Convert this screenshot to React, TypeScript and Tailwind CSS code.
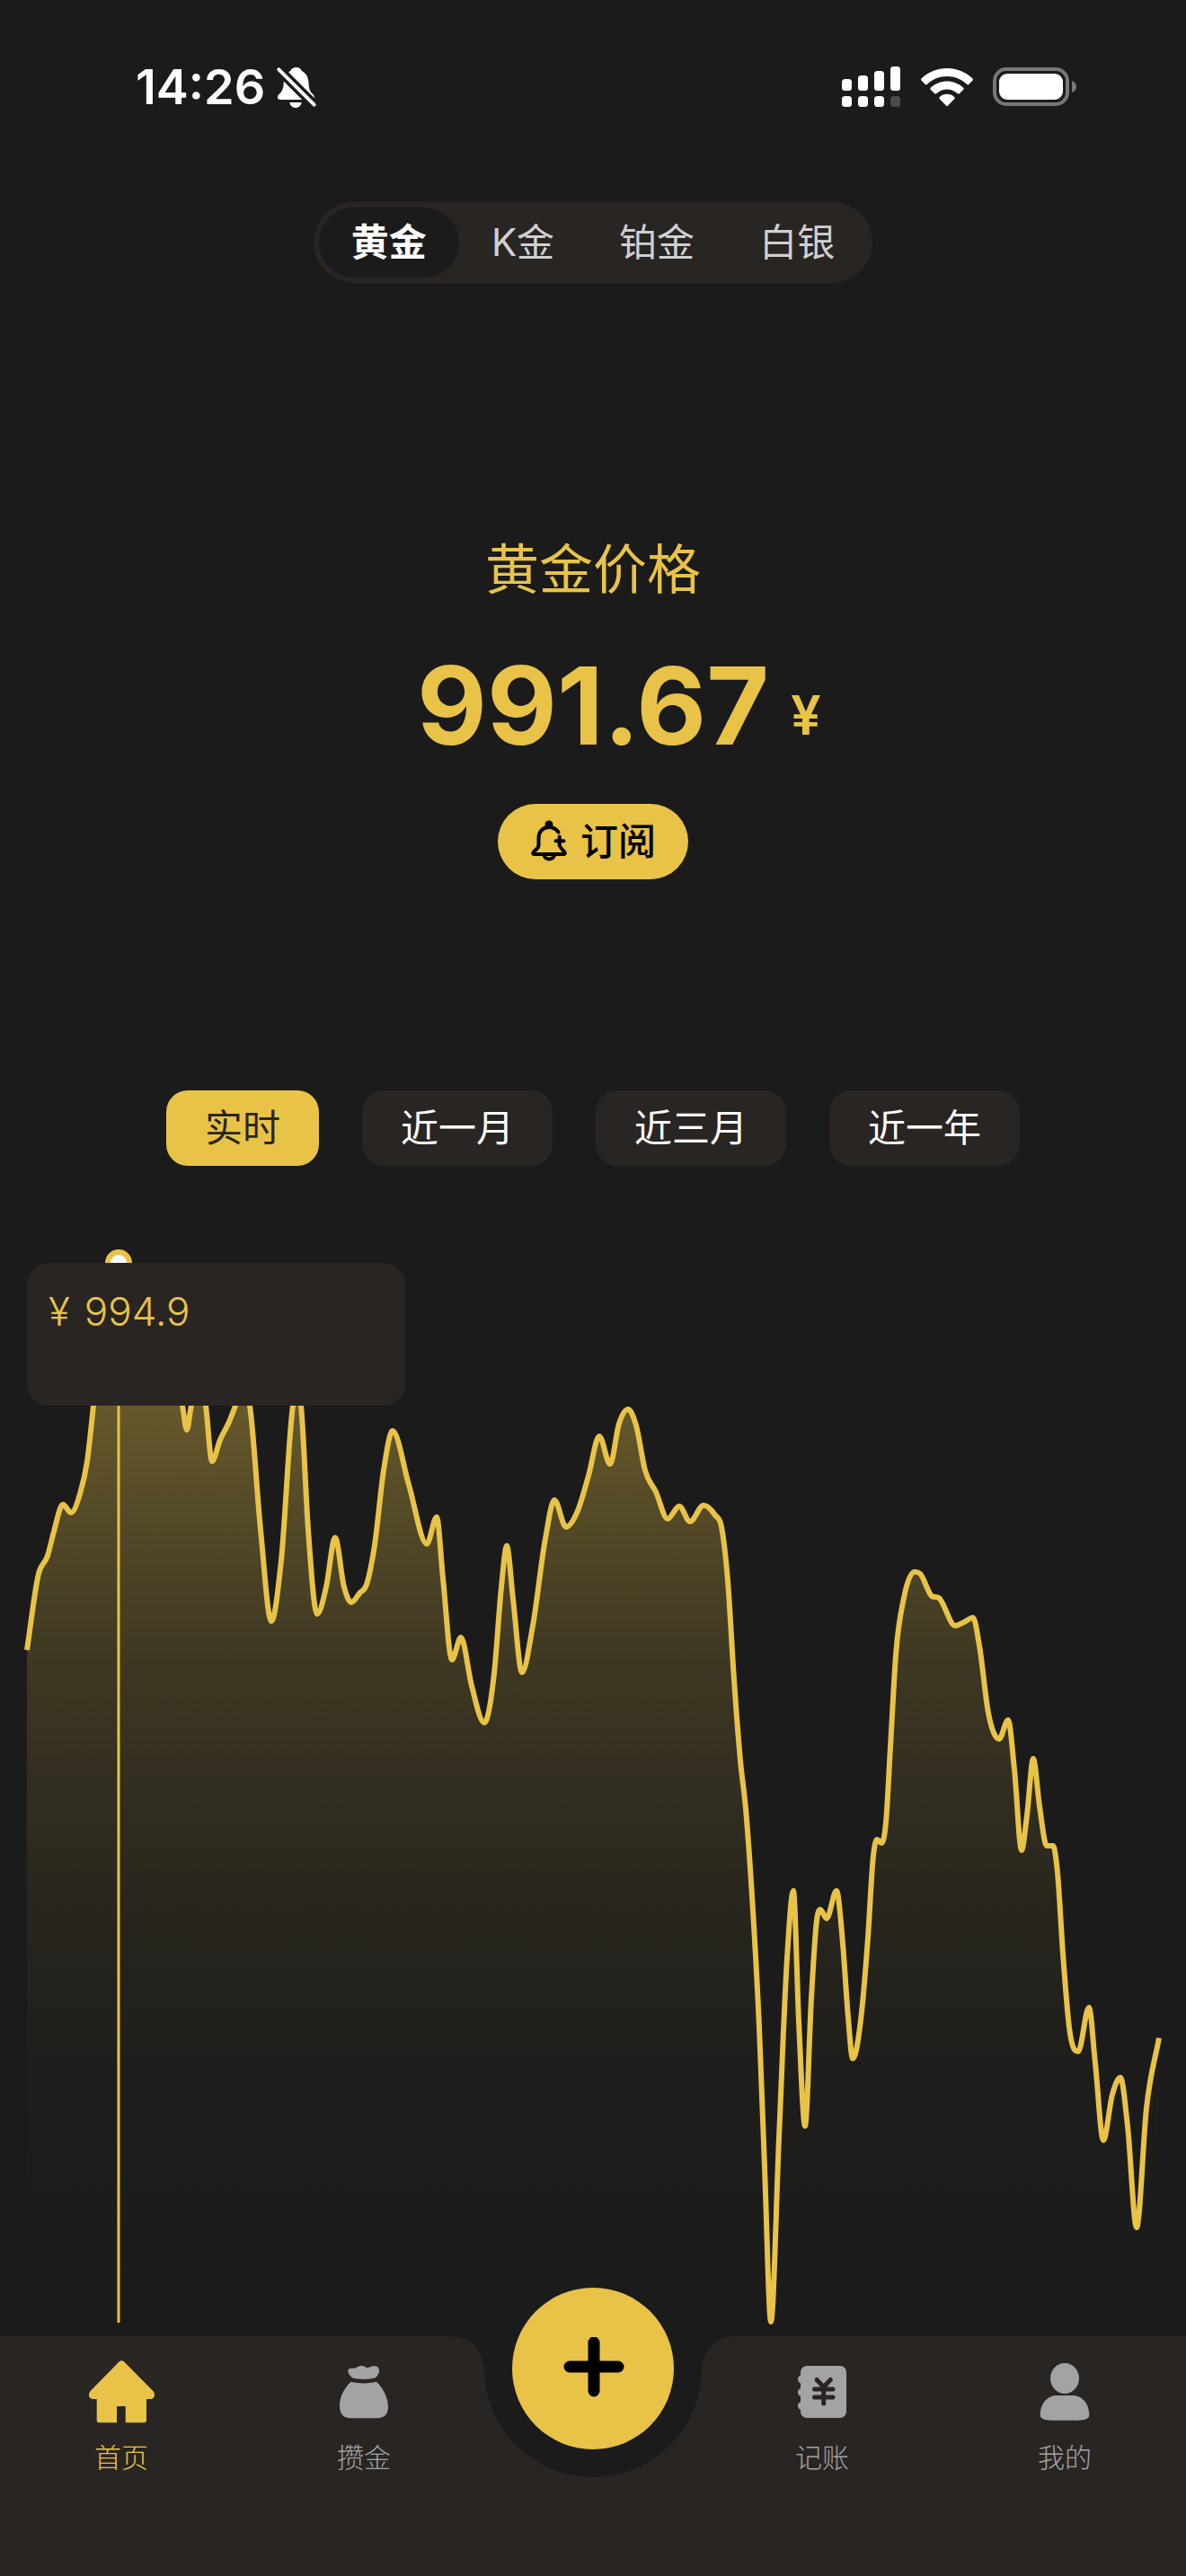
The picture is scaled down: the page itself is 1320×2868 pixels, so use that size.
import React from "react";

const metals = ["黄金", "K金", "铂金", "白银"];
const ranges = ["实时", "近一月", "近三月", "近一年"];

// [x, y] of the price line, in the chart's own units
const points: [number, number][] = [
  [30, 457], [43, 372], [53, 352], [60, 325], [70, 295], [79, 304], [89, 283], [97, 247],
  [104, 185], [112, 110], [131, 26], [170, 60], [203, 185], [208, 212], [212, 190], [220, 140],
  [229, 185], [236, 247], [245, 223], [255, 203], [262, 185], [270, 160], [278, 185], [290, 323],
  [302, 425], [313, 357], [326, 185], [331, 165], [335, 185], [343, 323], [353, 417], [363, 387],
  [373, 332], [383, 387], [391, 404], [400, 394], [408, 384], [417, 340], [427, 257], [437, 213],
  [455, 273], [475, 339], [486, 309], [493, 377], [503, 468], [513, 443], [525, 497], [539, 538],
  [550, 483], [558, 387], [564, 341], [571, 400], [581, 482], [593, 430], [607, 333], [617, 290],
  [630, 320], [643, 302], [655, 263], [667, 219], [679, 250], [689, 205], [699, 189], [708, 207],
  [718, 257], [730, 281], [743, 311], [756, 297], [768, 314], [783, 296], [796, 307], [803, 320],
  [810, 380], [817, 490], [824, 580], [830, 634], [837, 731], [845, 877], [851, 1033], [858, 1205],
  [867, 1000], [876, 800], [883, 725], [889, 870], [896, 987], [903, 845], [909, 758], [913, 746],
  [920, 756], [931, 725], [938, 784], [944, 866], [949, 912], [959, 860], [966, 777], [972, 686],
  [976, 668], [981, 672], [986, 649], [991, 565], [997, 463], [1006, 399], [1018, 370], [1024, 372],
  [1037, 397], [1045, 399], [1063, 430], [1073, 426], [1083, 421], [1090, 452], [1100, 527],
  [1112, 556], [1122, 535], [1129, 590], [1137, 680], [1143, 641], [1150, 578], [1157, 631],
  [1165, 675], [1172, 675], [1177, 705], [1183, 795], [1190, 877], [1200, 904],
  [1212, 855], [1219, 917], [1228, 1003], [1238, 952], [1247, 933], [1255, 987], [1265, 1100],
  [1276, 967], [1290, 889],
];

// monotone cubic line, flat at every peak and valley
const buildLine = (pts: [number, number][]) => {
  const slopes = pts.slice(1).map((p, i) => (p[1] - pts[i][1]) / (p[0] - pts[i][0]));
  const tangents = pts.map((_, i) => {
    if (i === 0) return slopes[0];
    if (i === pts.length - 1) return slopes[i - 1];
    const a = slopes[i - 1];
    const b = slopes[i];
    if (a * b <= 0) return 0;
    const h0 = pts[i][0] - pts[i - 1][0];
    const h1 = pts[i + 1][0] - pts[i][0];
    const mean = (a * h1 + b * h0) / (h0 + h1);
    return Math.sign(a) * Math.min(Math.abs(mean), 3 * Math.abs(a), 3 * Math.abs(b));
  });
  let d = `M${pts[0][0]} ${pts[0][1]}`;
  for (let i = 1; i < pts.length; i++) {
    const [x0, y0] = pts[i - 1];
    const [x1, y1] = pts[i];
    const h = (x1 - x0) / 3;
    d += `C${x0 + h} ${y0 + tangents[i - 1] * h} ${x1 - h} ${y1 - tangents[i] * h} ${x1} ${y1}`;
  }
  return d;
};

const line = buildLine(points);

const StatusBar = () => {
  return (
    <div className="flex h-[194px] items-center justify-between pl-[151px] pr-[121px]">
      <div className="flex items-center gap-3">
        <span className="text-[54px] leading-none font-semibold text-white">14:26</span>
        <svg width="46" height="48" viewBox="0 0 46 48" fill="#fff">
          <path d="M22.7 2c3 0 5.200 1.500 6.200 4 4.800 2.300 7.300 7 7.600 13 .3 7 1.500 10 4.700 13 1.500 1.500 1.800 2.700 1.500 4-.3 1.300-1.300 2-3 2H5c-1.700 0-2.700-.7-3-2-.3-1.300.1-2.500 1.500-4 3.700-3.500 5-6.500 5.200-13 .3-6 2.700-10.700 7.500-13 1-2.500 3.500-4 6.500-4zM15.300 41h13.400c-.5 3.500-3.200 6-6.700 6s-6.200-2.500-6.700-6z" />
          <path d="M2 3l42 42" stroke="#1b1b1b" strokeWidth="11" />
          <path d="M3.300 4.300l39.400 39.400" stroke="#fff" strokeWidth="4" strokeLinecap="round" />
        </svg>
      </div>
      <div className="flex items-center gap-[22px]">
        <svg width="66" height="48" viewBox="0 0 66 48" fill="#fff">
          <rect x="0" y="15" width="11" height="13" rx="3.500" />
          <rect x="18" y="11" width="11" height="17" rx="3.500" />
          <rect x="36" y="6" width="11" height="22" rx="3.500" />
          <rect x="54" y="1" width="11" height="27" rx="3.500" />
          <rect x="0" y="34" width="11" height="12" rx="3.500" />
          <rect x="18" y="34" width="11" height="12" rx="3.500" />
          <rect x="36" y="34" width="11" height="12" rx="3.500" />
          <rect x="54" y="34" width="11" height="12" rx="3.500" fill="#4a4a4a" />
        </svg>
        <svg width="58" height="43" viewBox="0 0 58 43" fill="#fff">
          <path d="M29 0C18 0 8 4.300.7 11.300c-.8.8-.8 1.700 0 2.500l3.800 3.900c.8.8 1.700.8 2.500.1C12.900 12.300 20.600 9 29 9s16.100 3.300 22 8.800c.8.7 1.700.7 2.500-.1l3.800-3.900c.8-.8.8-1.700 0-2.500C50 4.300 40 0 29 0z" />
          <path d="M29 14.500c-7 0-13.300 2.700-18 7-.8.800-.8 1.700 0 2.500l4 4c.8.700 1.600.7 2.400 0 3-2.800 7.100-4.600 11.600-4.600s8.600 1.800 11.600 4.600c.8.700 1.600.7 2.400 0l4-4c.8-.8.8-1.700 0-2.500-4.700-4.300-11-7-18-7z" />
          <path d="M29 28.800c-3.200 0-6 1.200-8.100 3.100-.8.8-.8 1.600 0 2.400l6.900 7.100c.8.800 1.600.8 2.400 0l6.900-7.100c.8-.8.8-1.600 0-2.400-2.100-1.900-4.900-3.100-8.100-3.100z" />
        </svg>
        <svg width="94" height="44" viewBox="0 0 94 44">
          <rect x="2" y="2" width="81" height="39" rx="13" fill="none" stroke="#777" strokeWidth="4" />
          <rect x="7" y="7" width="71" height="29" rx="9" fill="#fff" />
          <path d="M88 15c3 .8 5 3.500 5 6.500S91 27.200 88 28z" fill="#777" />
        </svg>
      </div>
    </div>
  );
};

const BellPlus = () => (
  <svg width="42" height="48" viewBox="0 0 42 48" fill="none" stroke="#000" strokeWidth="4" strokeLinecap="round" strokeLinejoin="round">
    <circle cx="21" cy="5" r="2.500" fill="#000" />
    <path d="M31.500 13.500C29 10 25.500 8 21 8 14 8 9.500 13 9.500 20v8c0 1.500-.5 2.500-1.500 3.500L3.500 36c-.8.900-.3 2 .8 2h33.400c1.100 0 1.600-1.100.8-2L34 30.500" />
    <path d="M32.700 18.500v10M28.500 23.300h9" />
    <path d="M15.500 39.500c.8 2.500 2.800 4 5.700 4s4.900-1.500 5.700-4" />
  </svg>
);

const PriceChart = () => {
  return (
    <div className="relative mt-[82px]">
      <svg viewBox="0 0 1320 1221" className="block h-auto w-full" role="img" aria-label="黄金价格走势">
        <defs>
          <linearGradient id="area" gradientUnits="userSpaceOnUse" x1="0" y1="26" x2="0" y2="1205">
            <stop offset="0" stopColor="#e8c347" stopOpacity="0.46" />
            <stop offset="0.135" stopColor="#e8c347" stopOpacity="0.36" />
            <stop offset="0.25" stopColor="#e8c347" stopOpacity="0.27" />
            <stop offset="0.38" stopColor="#e8c347" stopOpacity="0.17" />
            <stop offset="0.48" stopColor="#e8c347" stopOpacity="0.12" />
            <stop offset="0.59" stopColor="#e8c347" stopOpacity="0.07" />
            <stop offset="0.76" stopColor="#e8c347" stopOpacity="0.015" />
            <stop offset="1" stopColor="#e8c347" stopOpacity="0" />
          </linearGradient>
        </defs>
        <path d={`${line}V1205H30Z`} fill="url(#area)" />
        <path d={line} fill="none" stroke="#e8c347" strokeWidth="6" strokeLinejoin="round" />
        <path d="M132 26V1206" stroke="#e8c347" strokeWidth="3" />
        <circle cx="132" cy="26" r="12" fill="#fff" stroke="#e8c347" strokeWidth="6" />
      </svg>
      <div className="absolute left-[30px] top-[26px] h-[159px] w-[421px] rounded-3xl bg-[#292523] px-6 py-7">
        <p className="flex gap-4 text-[44px] leading-[52px] font-light text-[#e8c347]">
          <span>¥</span>
          <span>994.9</span>
        </p>
      </div>
    </div>
  );
};

const HomeIcon = () => (
  <svg width="84" height="84" viewBox="0 0 84 84" fill="currentColor">
    <path d="M39.500 8.500c1.700-1.700 4-1.700 5.700 0l31.600 32c1.600 1.600 2.200 3.200 2.200 5 0 2.800-2 4.500-4.700 4.500H70v23.500c0 1.900-1 2.800-2.800 2.800H46.700V58H37v18.300H17.500c-1.800 0-2.800-.9-2.800-2.800V50h-4.200C7.800 50 6 48.300 6 45.500c0-1.800.5-3.400 2.100-5z" />
  </svg>
);

const BagIcon = () => (
  <svg width="84" height="84" viewBox="0 0 84 84" fill="currentColor">
    <path d="M29 26.300c-2.500-2-4.700-5-4.700-7.500 0-2.200 1.500-3 4-3 2.700 0 4 .2 5.700-1 2-1.400 3.500-1.900 5.300-1.900 2.300 0 3.200.6 4.700 1.600 1.500 1 2.500.9 4.300 0 2-.9 4-1.300 6-1.200 3.200.2 5 2.700 4.700 6-.2 2.800-2 5-4.300 7-7 2.300-18.700 2.300-25.700 0z" />
    <path d="M27.700 30.700c8.500 2.300 19.300 2.300 28.300 0C64 38.500 69 49 69 59c0 8-4.500 12.300-12.500 12.300h-29C19.500 71.300 15 67 15 57.500c0-9.500 4.700-19.500 12.700-26.800z" />
  </svg>
);

const BookIcon = () => (
  <svg width="84" height="84" viewBox="0 0 84 84" fill="currentColor">
    <rect x="18" y="13" width="51" height="58" rx="7" />
    <circle cx="19.500" cy="28" r="4.500" />
    <circle cx="19.500" cy="42.500" r="4.500" />
    <circle cx="19.500" cy="57.500" r="4.500" />
    <path d="M36 28.500l7.700 8 7.700-8M43.700 37v18M33.500 39h20.500M33.500 48h20.500" fill="none" stroke="#292523" strokeWidth="5" strokeLinecap="round" strokeLinejoin="round" />
  </svg>
);

const UserIcon = () => (
  <svg width="84" height="84" viewBox="0 0 84 84" fill="currentColor">
    <ellipse cx="42" cy="27" rx="16" ry="17" />
    <path d="M33 46h18c10.500 0 18.300 9.500 18.300 22 0 4-5.300 5.700-12.300 5.700H27c-7 0-12.300-1.700-12.300-5.700C14.700 55.500 22.500 46 33 46z" />
  </svg>
);

const NavItem = ({ label, active, children }: { label: string; active?: boolean; children: React.ReactNode }) => (
  <a href="#" className={`flex flex-1 flex-col items-center gap-2 pt-5 ${active ? "text-[#e8c347]" : "text-[#a3a3a3]"}`}>
    {children}
    <span className="text-[30px] leading-[46px] font-light">{label}</span>
  </a>
);

const BottomNav = () => {
  return (
    <nav className="relative h-[267px]">
      {/* bar background with the notch for the add button */}
      <div className="absolute inset-0 flex">
        <div className="flex-1 bg-[#292523]" />
        <svg width="340" height="267" viewBox="0 0 340 267" className="shrink-0" fill="#292523">
          <path d="M0 0H10C36 0 47 16 49 36A121 121 0 0 0 291 36C293 16 304 0 330 0H340V267H0Z" />
        </svg>
        <div className="flex-1 bg-[#292523]" />
      </div>
      <div className="relative flex">
        <NavItem label="首页" active>
          <HomeIcon />
        </NavItem>
        <NavItem label="攒金">
          <BagIcon />
        </NavItem>
        <div className="flex w-[240px] justify-center">
          <button aria-label="添加" className="-mt-[54px] flex h-[180px] w-[180px] items-center justify-center rounded-full bg-[#e8c347]">
            <svg width="70" height="70" viewBox="0 0 70 70" stroke="#000" strokeWidth="13" strokeLinecap="round">
              <path d="M36 6v54M9 33h54" />
            </svg>
          </button>
        </div>
        <NavItem label="记账">
          <BookIcon />
        </NavItem>
        <NavItem label="我的">
          <UserIcon />
        </NavItem>
      </div>
    </nav>
  );
};

const App = () => {
  return (
    <div className="flex min-h-screen flex-col bg-[#1b1b1b] font-[Inter,'Noto_Sans_CJK_SC',sans-serif]">
      <StatusBar />
      <main className="flex flex-1 flex-col">
        <div className="mt-[31px] flex self-center rounded-full bg-[#292523] p-[6px]">
          {metals.map((m, i) => (
            <button
              key={m}
              className={`h-[78px] rounded-full px-9 text-[42px] leading-none ${
                i === 0 ? "bg-[#1b1b1b] font-bold text-white" : "font-normal text-[#d0d0d0]"
              }`}
            >
              {m}
            </button>
          ))}
        </div>

        <h1 className="mt-[277px] text-center text-[60px] leading-[84px] font-normal text-[#e8c347]">黄金价格</h1>
        <div className="mt-[50px] grid grid-cols-[1fr_auto_1fr] items-center text-[#e8c347]">
          <span />
          <span className="text-[120px] leading-[120px] font-bold">991.67</span>
          <span className="pl-6 pt-5 text-[60px] leading-none font-semibold">¥</span>
        </div>
        <button className="mt-[49px] flex h-[84px] items-center gap-[14px] self-center rounded-full bg-[#e8c347] px-9 text-[42px] leading-none font-medium text-black">
          <BellPlus />
          订阅
        </button>

        {/* time range */}
        <div className="mt-[235px] flex justify-center gap-12">
          {ranges.map((r, i) => (
            <button
              key={r}
              className={`h-[84px] rounded-3xl px-[43px] text-[42px] leading-none font-normal ${
                i === 0 ? "bg-[#e8c347] text-[#292523]" : "bg-[#292523] text-white"
              }`}
            >
              {r}
            </button>
          ))}
        </div>

        <PriceChart />
      </main>
      <BottomNav />
    </div>
  );
};

export default App;
